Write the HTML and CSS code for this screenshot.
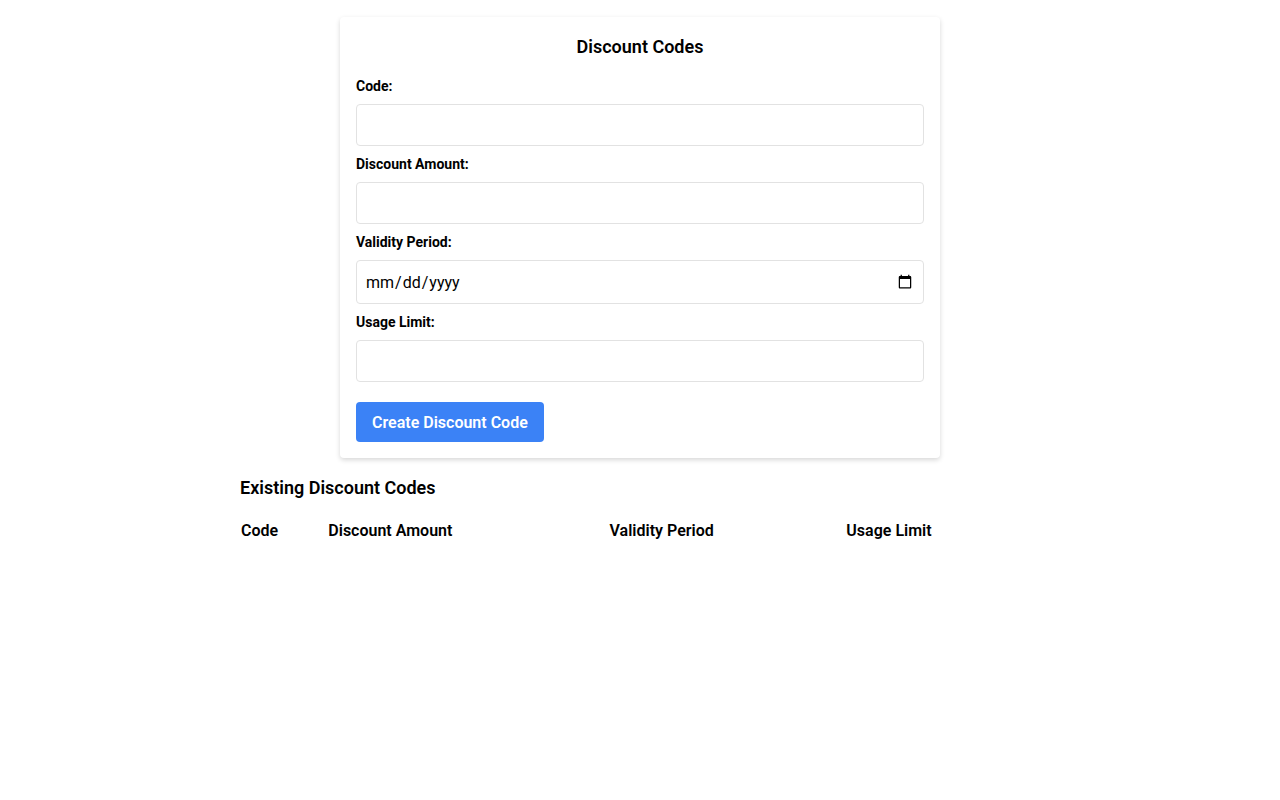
FILE: index.html
```html
<!DOCTYPE html>
<html lang="en">
<head>
<meta charset="utf-8">
<title>Discount Codes</title>
<link rel="stylesheet" href="styles.css">
</head>
<body>
<div class="page">
  <form class="card">
    <h2 class="card-title">Discount Codes</h2>
    <label class="label" for="code">Code:</label>
    <input class="input" id="code" type="text">
    <label class="label" for="amount">Discount Amount:</label>
    <input class="input" id="amount" type="number">
    <label class="label" for="validity">Validity Period:</label>
    <input class="input" id="validity" type="date">
    <label class="label" for="limit">Usage Limit:</label>
    <input class="input" id="limit" type="number">
    <button class="btn" type="button">Create Discount Code</button>
  </form>
  <section class="existing">
    <h3 class="existing-title">Existing Discount Codes</h3>
    <table class="codes">
      <thead>
        <tr>
          <th>Code</th>
          <th>Discount Amount</th>
          <th>Validity Period</th>
          <th>Usage Limit</th>
        </tr>
      </thead>
      <tbody></tbody>
    </table>
  </section>
</div>
</body>
</html>
```

FILE: styles.css
```css
* { box-sizing: border-box; }
html, body { margin: 0; padding: 0; background: #fff; }
body {
  font-family: Roboto, "Liberation Sans", sans-serif;
  color: #000;
}
.page {
  padding-top: 17px;
  display: flex;
  flex-direction: column;
  align-items: center;
}
.card {
  width: 600px;
  padding: 16px;
  background: #fff;
  border-radius: 4px;
  box-shadow: 0 2px 5px rgba(0, 0, 0, 0.16);
  display: flex;
  flex-direction: column;
}
.card-title {
  margin: 0 0 16px;
  font-size: 18px;
  line-height: 27px;
  font-weight: 600;
  text-align: center;
}
.label {
  display: block;
  font-size: 14px;
  line-height: 20px;
  font-weight: 700;
  margin-bottom: 8px;
}
.input {
  display: block;
  width: 100%;
  height: 42px;
  margin: 0 0 8px;
  padding: 8px;
  border: 1px solid #e2e2e2;
  border-radius: 4px;
  font-family: Roboto, "Liberation Sans", sans-serif;
  font-size: 16px;
  background: #fff;
  color: #000;
}
.input[type="date"] { height: 44px; }
.btn {
  align-self: flex-start;
  margin-top: 12px;
  height: 40px;
  padding: 0 16px;
  border: none;
  border-radius: 4px;
  background: #3b82f6;
  color: #fff;
  font-family: Roboto, "Liberation Sans", sans-serif;
  font-size: 16px;
  font-weight: 600;
  cursor: pointer;
}
.existing {
  width: 800px;
  margin-top: 16px;
}
.existing-title {
  margin: 0 0 16px;
  font-size: 18px;
  line-height: 28px;
  font-weight: 600;
}
.codes {
  width: 100%;
  border-collapse: collapse;
}
.codes th {
  text-align: left;
  padding: 1px;
  font-size: 16px;
  line-height: 24px;
  font-weight: 600;
}
```
